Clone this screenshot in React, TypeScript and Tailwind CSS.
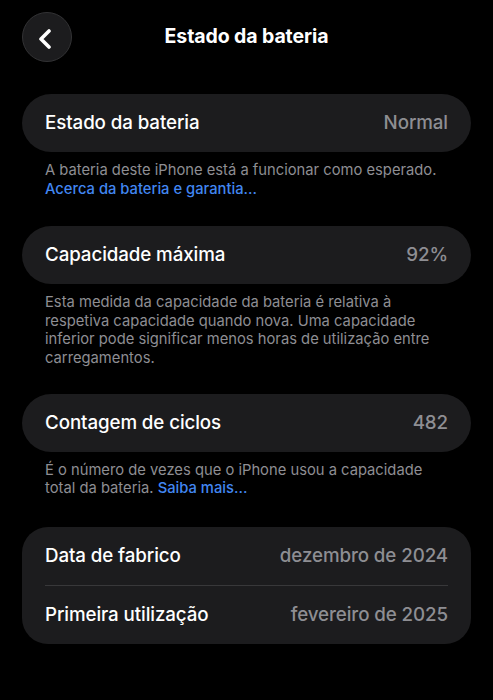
import { ReactNode } from 'react';

const font = { fontFamily: 'Inter, "Liberation Sans", sans-serif' };

function Row({ label, value }: { label: string; value: string }) {
  return (
    <div className="flex items-center justify-between h-[58px] px-[23px]">
      <span className="text-[18.75px] text-white font-medium tracking-[-0.1px]">{label}</span>
      <span className="text-[18.75px] text-[#8e8e93] font-medium tracking-[-0.1px]">{value}</span>
    </div>
  );
}

function Note({ children }: { children: ReactNode }) {
  return (
    <p className="px-[23px] pt-[9px] text-[14.75px] leading-[18.6px] text-[#8e8e93]">{children}</p>
  );
}

function App() {
  return (
    <div className="min-h-[700px] bg-black" style={font}>
      <div className="relative flex items-center justify-center h-[76px]">
        <button className="absolute left-[22px] top-[12px] w-[50px] h-[50px] rounded-full bg-[#1c1c1e] border border-[#323234] flex items-center justify-center">
          <svg width="16" height="20" viewBox="0 0 16 20" className="mt-[4px] -ml-[4px]">
            <path d="M12 2 L4 10 L12 18" fill="none" stroke="white" strokeWidth="3.6" strokeLinecap="round" strokeLinejoin="round" />
          </svg>
        </button>
        <h1 className="text-[19.5px] font-bold text-white -mt-[2px] tracking-[-0.1px]">Estado da bateria</h1>
      </div>

      <div className="px-[22px] pt-[18px]">
        <div className="bg-[#1c1c1e] rounded-full">
          <Row label="Estado da bateria" value="Normal" />
        </div>
        <Note>
          A bateria deste iPhone está a funcionar como esperado.
          <br />
          <span className="text-[#4287f2] font-medium">Acerca da bateria e garantia...</span>
        </Note>

        <div className="bg-[#1c1c1e] rounded-full mt-[28px]">
          <Row label="Capacidade máxima" value="92%" />
        </div>
        <Note>
          Esta medida da capacidade da bateria é relativa à respetiva capacidade quando nova. Uma capacidade
          inferior pode significar menos horas de utilização entre carregamentos.
        </Note>

        <div className="bg-[#1c1c1e] rounded-full mt-[26px]">
          <Row label="Contagem de ciclos" value="482" />
        </div>
        <Note>
          É o número de vezes que o iPhone usou a capacidade total da bateria.{' '}
          <span className="text-[#4287f2] font-medium">Saiba mais...</span>
        </Note>

        <div className="bg-[#1c1c1e] rounded-[26px] mt-[29px]">
          <Row label="Data de fabrico" value="dezembro de 2024" />
          <div className="mx-[23px] h-px bg-[#38383a]" />
          <Row label="Primeira utilização" value="fevereiro de 2025" />
        </div>
      </div>
    </div>
  );
}

export default App;
